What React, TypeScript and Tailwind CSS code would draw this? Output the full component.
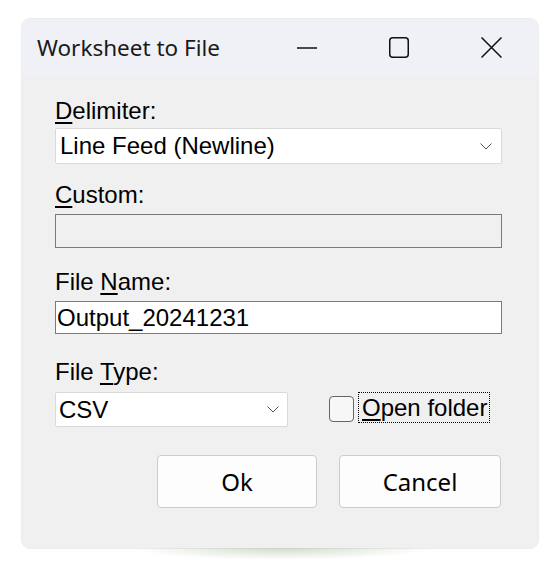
import React, { useState } from 'react'

const sans = { fontFamily: '"Liberation Sans", Arial, sans-serif' }
const ui = { fontFamily: '"Noto Sans", "Open Sans", sans-serif' }

function Chevron() {
  return (
    <svg width="12" height="7" viewBox="0 0 12 7" fill="none">
      <polyline points="0.5,0.5 6,6 11.5,0.5" stroke="#555" strokeWidth="1" />
    </svg>
  )
}

function Label({ pre, mn, post, className }: { pre?: string; mn: string; post: string; className?: string }) {
  return (
    <div className={`h-[28px] leading-[28px] text-[24px] text-black ${className ?? ''}`}>
      {pre}
      <u className="underline underline-offset-[3px] decoration-[1.5px]">{mn}</u>
      {post}
    </div>
  )
}

export default function App() {
  const [fileName, setFileName] = useState('Output_20241231')
  const [openFolder, setOpenFolder] = useState(false)

  return (
    <div className="min-h-[573px] bg-white pt-[19px] pl-[22px]" style={sans}>
      <div className="w-[516px] h-[529px] rounded-[8px] bg-[#f0f0f0] overflow-hidden flex flex-col shadow-[0_0_0_1px_rgba(90,110,80,0.12)]">
        <div className="h-[57px] bg-[#f0f1f6] flex items-center shrink-0">
          <div className="pl-[15px] text-[22.5px] text-[#1a1a1a]" style={ui}>
            Worksheet to File
          </div>
          <div className="ml-auto flex h-full mr-[1px]">
            <div className="w-[92px] h-full flex items-center justify-center">
              <svg width="20" height="20" viewBox="0 0 20 20">
                <line x1="0" y1="10" x2="20" y2="10" stroke="#111" strokeWidth="1.5" />
              </svg>
            </div>
            <div className="w-[92px] h-full flex items-center justify-center">
              <svg width="20" height="21" viewBox="0 0 20 21" fill="none">
                <rect x="0.75" y="0.75" width="18.5" height="19.5" rx="3" stroke="#111" strokeWidth="1.5" />
              </svg>
            </div>
            <div className="w-[92px] h-full flex items-center justify-center">
              <svg width="21" height="21" viewBox="0 0 21 21">
                <path d="M0.5 0.5 L20.5 20.5 M20.5 0.5 L0.5 20.5" stroke="#111" strokeWidth="1.5" />
              </svg>
            </div>
          </div>
        </div>

        <div className="flex flex-col pl-[33px] pr-[36px]">
          <Label mn="D" post="elimiter:" className="mt-[21px]" />
          <div className="mt-[3px] h-[36px] bg-white border border-[#d9d9d9] rounded-[2px] flex items-center pl-[4px] pr-[9px]">
            <span className="text-[24px] leading-[34px] text-black">Line Feed (Newline)</span>
            <span className="ml-auto flex"><Chevron /></span>
          </div>

          <Label mn="C" post="ustom:" className="mt-[17px]" />
          <div className="mt-[5px] h-[34px] border border-[#7a7a7a] bg-[#f0f0f0]" />

          <Label pre="File " mn="N" post="ame:" className="mt-[20px]" />
          <input
            value={fileName}
            onChange={e => setFileName(e.target.value)}
            className="mt-[5px] h-[33px] border border-[#7a7a7a] bg-white px-[1px] text-[24px] leading-[31px] text-black outline-none"
          />

          <Label pre="File " mn="T" post="ype:" className="mt-[24px]" />
          <div className="mt-[6px] flex items-start">
            <div className="w-[233px] h-[35px] bg-white border border-[#d9d9d9] rounded-[2px] flex items-center pl-[3px] pr-[8px]">
              <span className="text-[24px] leading-[33px] text-black">CSV</span>
              <span className="ml-auto flex"><Chevron /></span>
            </div>
            <label className="ml-[41px] flex items-center cursor-default" onClick={() => setOpenFolder(!openFolder)}>
              <span className="mt-[2px] w-[25px] h-[26px] rounded-[4px] border-[1.5px] border-[#666] bg-[#f7f7f7] flex items-center justify-center">
                {openFolder && (
                  <svg width="14" height="11" viewBox="0 0 14 11" fill="none">
                    <polyline points="1,6 5,10 13,1" stroke="#111" strokeWidth="1.5" />
                  </svg>
                )}
              </span>
              <span className="ml-[4px] h-[31px] border border-dotted border-black pl-[3px] pr-[2px] text-[24px] leading-[29px] text-black">
                <u className="underline underline-offset-[3px] decoration-[1.5px]">O</u>pen folder
              </span>
            </label>
          </div>

          <div className="mt-[28px] flex justify-end gap-[22px] pr-[1px]">
            <button className="w-[160px] h-[53px] rounded-[4px] border border-[#cccccc] bg-[#fdfdfd] text-[24px] text-black" style={ui}>
              Ok
            </button>
            <button className="w-[162px] h-[53px] rounded-[4px] border border-[#cccccc] bg-[#fdfdfd] text-[24px] text-black" style={ui}>
              Cancel
            </button>
          </div>
        </div>
      </div>
      <div className="ml-[110px] w-[300px] h-[12px] bg-[radial-gradient(ellipse_at_top,rgba(170,190,160,0.55),rgba(255,255,255,0)_70%)]" />
    </div>
  )
}
